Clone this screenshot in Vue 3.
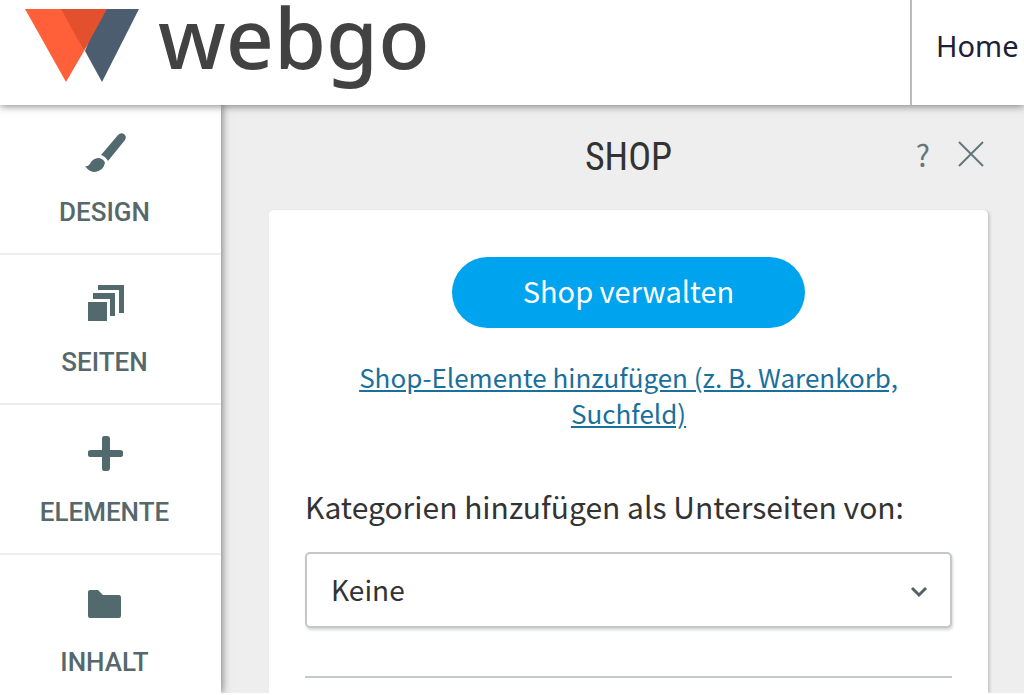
<script setup>
import { ref } from 'vue'

const items = [
  { id: 'design', label: 'DESIGN' },
  { id: 'pages', label: 'SEITEN' },
  { id: 'elements', label: 'ELEMENTE' },
  { id: 'content', label: 'INHALT' },
]
const parent = ref('Keine')
</script>

<template>
  <div class="app">
    <header class="topbar">
      <a class="brand" href="#" aria-label="webgo">
        <svg class="mark" viewBox="0 0 114 74" aria-hidden="true">
          <path d="M76 0H114L77 73L60 42Z" fill="#4d5d70" />
          <path d="M0 0H38L59 42L41 73Z" fill="#ff6039" />
          <path d="M38 0H98L77 42L59 42Z" fill="none" />
          <path d="M36 0H82L59 42Z" fill="#e2502d" />
        </svg>
        <span class="wordmark">webgo</span>
      </a>
      <nav class="topnav"><a href="#">Home</a></nav>
    </header>

    <div class="main">
      <nav class="sidebar">
        <button v-for="item in items" :key="item.id" type="button" class="item">
          <svg class="icon" viewBox="0 0 44 44" aria-hidden="true">
            <template v-if="item.id === 'design'">
              <path d="M35 4Q38 1 41 3Q44 5 42 9L25 30Q22 25 18 24Z" />
              <path d="M16 27Q21 28 22 32Q20 40 12 41Q6 41 2 35Q6 36 8 31Q11 27 16 27Z" />
            </template>
            <template v-else-if="item.id === 'pages'">
              <path d="M5 21H24V40H5Z" />
              <path d="M10 12H32V35H27V18H10Z" />
              <path d="M15 4H41V32H36V9H15Z" />
            </template>
            <path v-else-if="item.id === 'elements'" d="M21 5H24Q27 5 27 8V19H37Q40 19 40 21V24Q40 26 37 26H27V37Q27 40 24 40H21Q19 40 19 37V26H8Q5 26 5 24V21Q5 19 8 19H19V8Q19 5 21 5Z" />
            <path v-else d="M7 9H15L20 14H36Q38 14 38 17V35Q38 37 36 37H7Q5 37 5 35V11Q5 9 7 9Z" />
          </svg>
          <span>{{ item.label }}</span>
        </button>
      </nav>

      <section class="panel">
        <div class="panel-head">
          <h1>SHOP</h1>
          <div class="tools">
            <button type="button" class="help" aria-label="Hilfe">?</button>
            <button type="button" aria-label="Schließen">
              <svg class="close" viewBox="0 0 26 26" aria-hidden="true">
                <path d="M1 1L25 25M25 1L1 25" />
              </svg>
            </button>
          </div>
        </div>

        <div class="card">
          <button type="button" class="primary">Shop verwalten</button>
          <a class="add" href="#">Shop-Elemente hinzufügen (z. B. Warenkorb, Suchfeld)</a>
          <label for="parent">Kategorien hinzufügen als Unterseiten von:</label>
          <div class="select">
            <select id="parent" v-model="parent">
              <option>Keine</option>
            </select>
            <svg class="chevron" viewBox="0 0 18 12" aria-hidden="true"><path d="M2 2L9 9L16 2" /></svg>
          </div>
          <hr />
        </div>
      </section>
    </div>
  </div>
</template>

<style>
body {
  margin: 0;
  overflow: hidden;
  background: #fff;
}
</style>

<style scoped>
.app {
  height: calc(100vh - 2px);
  display: flex;
  flex-direction: column;
  overflow: hidden;
  font-family: "Noto Sans CJK SC", "Noto Sans", sans-serif;
  color: #333;
}
button {
  border: 0;
  padding: 0;
  background: none;
  font: inherit;
  color: inherit;
}
.topbar {
  position: relative;
  z-index: 2;
  flex: 0 0 105px;
  display: flex;
  justify-content: space-between;
  background: #fff;
  box-shadow: 0 1px 8px rgba(0, 0, 0, 0.5);
}
.brand {
  display: flex;
  align-items: flex-start;
  gap: 19px;
  padding-left: 25px;
  color: #424242;
  text-decoration: none;
}
.mark {
  width: 114px;
  height: 74px;
  margin-top: 9px;
}
.wordmark {
  font: 500 84px/74px "Noto Sans", sans-serif;
}
.topnav {
  display: flex;
  align-items: center;
  box-sizing: border-box;
  width: 114px;
  padding: 0 0 14px 24px;
  border-left: 2px solid #bbb;
}
.topnav a {
  font: 29px/40px "Noto Sans", sans-serif;
  color: #1d2036;
  text-decoration: none;
}
.main {
  flex: 1;
  display: flex;
  min-height: 0;
}
.sidebar {
  position: relative;
  z-index: 1;
  flex: 0 0 221px;
  background: #fff;
  box-shadow: 1px 0 8px rgba(0, 0, 0, 0.5);
}
.item {
  display: flex;
  flex-direction: column;
  align-items: center;
  gap: 21px;
  box-sizing: border-box;
  width: 100%;
  height: 150px;
  padding: 26px 12px 0 0;
  border-bottom: 2px solid #ededed;
  font: 500 26px/32px Roboto, sans-serif;
  color: #56686b;
}
.icon {
  width: 44px;
  height: 44px;
  fill: #526a6d;
}
.panel {
  flex: 1;
  display: flex;
  flex-direction: column;
  padding: 0 36px 0 48px;
  background: #eee;
}
.panel-head {
  position: relative;
  flex: 0 0 105px;
}
h1 {
  margin: 0;
  font: 400 38px/105px "Roboto Condensed", "Liberation Sans Narrow", Roboto, sans-serif;
  text-align: center;
}
.tools {
  position: absolute;
  top: 29px;
  right: 4px;
  display: flex;
  align-items: center;
  gap: 28px;
  height: 40px;
  color: #66777b;
}
.help {
  font-size: 30px;
  line-height: 40px;
}
.close {
  display: block;
  width: 26px;
  height: 26px;
  fill: none;
  stroke: #66777b;
  stroke-width: 2;
}
.card {
  flex: 1;
  display: flex;
  flex-direction: column;
  padding: 47px 36px 0;
  border-radius: 5px 5px 0 0;
  background: #fff;
  box-shadow: 2px 1px 3px rgba(0, 0, 0, 0.16);
}
.primary {
  align-self: center;
  box-sizing: border-box;
  width: 353px;
  height: 71px;
  padding-bottom: 6px;
  border-radius: 36px;
  background: #00a3ee;
  color: #fff;
  font-size: 29px;
  line-height: 64px;
}
.add {
  margin: 31px 36px 0;
  font-size: 26px;
  line-height: 36px;
  text-align: center;
  color: #1a6f9c;
}
label {
  margin-top: 55px;
  font-size: 30px;
  line-height: 40px;
}
.select {
  position: relative;
  margin-top: 26px;
}
select {
  appearance: none;
  display: block;
  box-sizing: border-box;
  width: 100%;
  height: 76px;
  padding: 0 60px 2px 24px;
  border: 2px solid #c4c8c8;
  border-radius: 5px;
  background: #fff;
  box-shadow: 1px 2px 3px rgba(0, 0, 0, 0.16);
  font: inherit;
  font-size: 28px;
  color: #333;
}
.chevron {
  position: absolute;
  top: 34px;
  right: 24px;
  width: 18px;
  height: 12px;
  fill: none;
  stroke: #566266;
  stroke-width: 3;
}
hr {
  width: 100%;
  margin: 48px 0 0;
  border: 0;
  border-top: 2px solid #c4c8c8;
}
</style>
